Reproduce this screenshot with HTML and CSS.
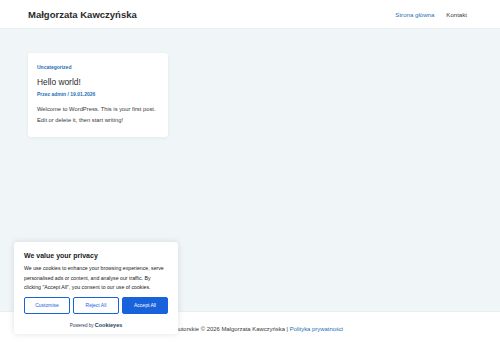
FILE: index.html
```html
<!DOCTYPE html>
<html lang="pl">
<head>
  <meta charset="UTF-8">
  <meta name="viewport" content="width=device-width, initial-scale=1.0">
  <title>Małgorzata Kawczyńska</title>
  <link rel="stylesheet" href="styles.css">
</head>
<body>
  <header class="site-header">
    <div class="site-title">Małgorzata Kawczyńska</div>
    <nav class="main-nav">
      <a href="#" class="current">Strona główna</a>
      <a href="#">Kontakt</a>
    </nav>
  </header>

  <main class="site-content">
    <article class="post-card">
      <a href="#" class="post-cat">Uncategorized</a>
      <h2 class="post-title">Hello world!</h2>
      <div class="post-meta">Przez admin / 19.01.2026</div>
      <p class="post-excerpt">Welcome to WordPress. This is your first post. Edit or delete it, then start writing!</p>
    </article>
  </main>

  <footer class="site-footer">
    Prawa autorskie © 2026 Małgorzata Kawczyńska | <a href="#">Polityka prywatności</a>
  </footer>

  <div class="cookie-banner">
    <div class="cookie-title">We value your privacy</div>
    <p class="cookie-text">We use cookies to enhance your browsing experience, serve personalised ads or content, and analyse our traffic. By clicking "Accept All", you consent to our use of cookies.</p>
    <div class="cookie-buttons">
      <button class="btn btn-outline">Customise</button>
      <button class="btn btn-outline">Reject All</button>
      <button class="btn btn-primary">Accept All</button>
    </div>
    <div class="cookie-powered">Powered by <b>Cookieyes</b></div>
  </div>
</body>
</html>
```

FILE: styles.css
```css
* {
  margin: 0;
  padding: 0;
  box-sizing: border-box;
}

body {
  font-family: 'Liberation Sans', Arial, sans-serif;
  background: #f0f5f8;
  color: #3a3a3a;
  height: 348px;
  display: flex;
  flex-direction: column;
  overflow: hidden;
}

a {
  text-decoration: none;
}

.site-header {
  height: 29px;
  background: #ffffff;
  border-bottom: 1px solid #e8eef2;
  display: flex;
  align-items: center;
  justify-content: space-between;
  padding: 0 33px 0 28px;
}

.site-title {
  font-size: 9.5px;
  font-weight: 700;
  color: #2a2a2a;
}

.main-nav {
  display: flex;
  gap: 12px;
  font-size: 6.1px;
}

.main-nav a {
  color: #3a3a3a;
}

.main-nav a.current {
  color: #1e6fb5;
}

.site-content {
  flex: 1;
  padding: 24px 28px 0;
}

.post-card {
  width: 140px;
  background: #ffffff;
  border-radius: 3px;
  box-shadow: 0 1px 4px rgba(0, 0, 0, 0.05);
  padding: 11px 9px 11px;
}

.post-cat {
  display: block;
  font-size: 5px;
  font-weight: 700;
  color: #1e6fb5;
  margin-bottom: 7px;
}

.post-title {
  font-size: 8.4px;
  font-weight: 400;
  color: #2a2a2a;
  margin-bottom: 4px;
}

.post-meta {
  font-size: 5px;
  font-weight: 700;
  color: #1e6fb5;
  margin-bottom: 7px;
}

.post-excerpt {
  font-size: 5.8px;
  line-height: 11px;
  color: #3a3a3a;
}

.site-footer {
  height: 37px;
  background: #ffffff;
  border-top: 1px solid #e8eef2;
  font-size: 5.9px;
  color: #3a3a3a;
  text-align: center;
  padding-top: 14px;
}

.site-footer a {
  color: #1e6fb5;
}

.cookie-banner {
  position: absolute;
  left: 14px;
  top: 242px;
  width: 164px;
  background: #ffffff;
  border-radius: 3px;
  box-shadow: 0 0 6px rgba(0, 0, 0, 0.12);
  padding: 10px 10px 6px;
}

.cookie-title {
  font-size: 7px;
  font-weight: 700;
  color: #212121;
  margin-bottom: 5px;
}

.cookie-text {
  font-size: 5.2px;
  line-height: 9.5px;
  color: #212121;
  margin-bottom: 4px;
  padding-right: 2px;
}

.cookie-buttons {
  display: flex;
  gap: 3px;
}

.btn {
  flex: 1;
  height: 17px;
  font-family: inherit;
  font-size: 5px;
  border-radius: 2px;
  border: 1px solid #1863dc;
}

.btn-outline {
  background: #ffffff;
  color: #1863dc;
}

.btn-primary {
  background: #1863dc;
  color: #ffffff;
}

.cookie-powered {
  text-align: center;
  font-size: 4.5px;
  color: #293c5b;
  margin-top: 8px;
}

.cookie-powered b {
  font-size: 5.5px;
}
```
